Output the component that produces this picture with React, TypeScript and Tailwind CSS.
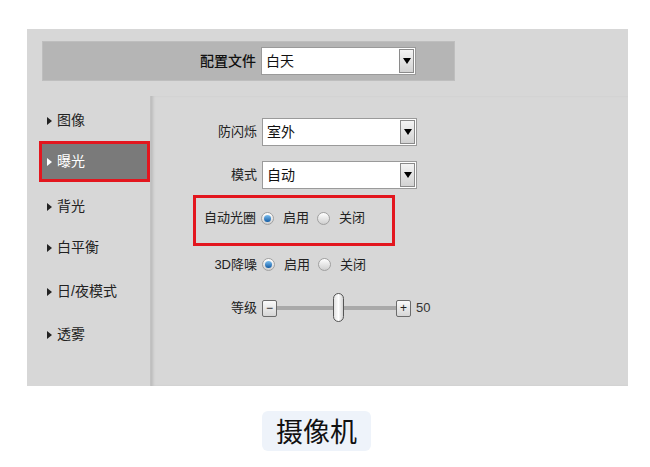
import React from 'react';

const menu = ['图像', '曝光', '背光', '白平衡', '日/夜模式', '透雾'];
const menuGaps = ['', '', 'mt-[4px]', 'mt-[0px]', 'mt-[3px]', 'mt-[2px]'];

const Triangle = ({ light }: { light?: boolean }) => (
  <span
    className={`inline-block h-0 w-0 border-y-[4px] border-l-[5px] border-y-transparent ${
      light ? 'border-l-white' : 'border-l-[#222]'
    }`}
  />
);

const Select = ({ value }: { value: string }) => (
  <div className="flex h-[28px] w-[155px] items-stretch border border-[#9a9a9a] bg-white">
    <span className="flex-1 pl-[4px] text-[14px] leading-[26px] text-[#111]">{value}</span>
    <span className="m-[1px] flex w-[15px] items-center justify-center border border-[#8a8a8a] bg-gradient-to-b from-[#f4f4f4] to-[#d2d2d2]">
      <span className="h-0 w-0 border-x-[4px] border-t-[6px] border-x-transparent border-t-black" />
    </span>
  </div>
);

const Radio = ({ checked }: { checked?: boolean }) => (
  <span className="flex h-[13px] w-[13px] items-center justify-center rounded-full border border-[#a0a0a0] bg-gradient-to-b from-[#ffffff] to-[#cfcfcf]">
    {checked && <span className="h-[7px] w-[7px] rounded-full bg-gradient-to-b from-[#7cc0f0] to-[#0a5aa3]" />}
  </span>
);

const RadioPair = () => (
  <div className="flex items-center text-[13px] text-[#222]">
    <Radio checked />
    <span className="ml-[9px]">启用</span>
    <span className="ml-[8px]">
      <Radio />
    </span>
    <span className="ml-[9px]">关闭</span>
  </div>
);

const StepButton = ({ sign }: { sign: string }) => (
  <span className="flex h-[17px] w-[15px] items-center justify-center rounded-[2px] border border-[#6b6b6b] bg-gradient-to-b from-[#fafafa] to-[#d6d6d6] text-[12px] leading-none text-[#222]">
    {sign}
  </span>
);

export default function App() {
  return (
    <div className="h-[467px] w-[650px] bg-white pl-[27px] pt-[29px] font-['Liberation_Sans','Noto_Sans_CJK_SC',sans-serif] text-[#222]">
      <div className="flex h-[357px] w-[601px] flex-col bg-[#d7d7d7]">
        {/* 配置文件 */}
        <div className="ml-[15px] mt-[12px] flex h-[40px] w-[413px] items-center justify-end border border-[#bebebe] bg-[#b5b5b5] pr-[38px]">
          <span className="mr-[5px] text-[14px] font-medium text-[#111]">配置文件</span>
          <Select value="白天" />
        </div>

        <div className="mt-[15px] flex flex-1">
          {/* 左侧菜单 */}
          <div className="w-[123px] pt-[4px]">
            {menu.map((item, i) =>
              i === 1 ? (
                <div
                  key={item}
                  className="ml-[12px] flex h-[41px] items-center border-[3px] border-[#e3161e] bg-[#7a7a7a] pl-[5px] text-[14px] text-white"
                >
                  <Triangle light />
                  <span className="ml-[5px]">{item}</span>
                </div>
              ) : (
                <div key={item} className={`ml-[12px] flex h-[41px] items-center pl-[8px] text-[14px] ${menuGaps[i]}`}>
                  <Triangle />
                  <span className="ml-[5px]">{item}</span>
                </div>
              )
            )}
          </div>

          {/* 设置内容 */}
          <div className="flex-1 border-l border-[#c2c2c2] pt-[21px] text-[13px] shadow-[inset_3px_0_3px_-1px_rgba(0,0,0,0.13)]">
            <div className="flex h-[29px] items-center">
              <span className="w-[106px] text-right">防闪烁</span>
              <span className="ml-[5px]">
                <Select value="室外" />
              </span>
            </div>
            <div className="mt-[14px] flex h-[29px] items-center">
              <span className="w-[106px] text-right">模式</span>
              <span className="ml-[5px]">
                <Select value="自动" />
              </span>
            </div>
            <div className="ml-[42px] mt-[6px] flex h-[51px] w-[202px] items-center border-[3px] border-[#e3161e] pb-[5px]">
              <span className="w-[60px] text-right">自动光圈</span>
              <span className="ml-[5px]">
                <RadioPair />
              </span>
            </div>
            <div className="mt-[4px] flex h-[29px] items-center">
              <span className="w-[106px] text-right">3D降噪</span>
              <span className="ml-[5px]">
                <RadioPair />
              </span>
            </div>
            <div className="mt-[14px] flex h-[30px] items-center">
              <span className="w-[106px] text-right">等级</span>
              <div className="ml-[5px] flex items-center">
                <StepButton sign="−" />
                <div className="relative h-[4px] w-[119px] bg-[#a9a9a9]">
                  <span className="absolute left-[56px] top-[-13px] h-[29px] w-[11px] rounded-full border border-[#555] bg-gradient-to-r from-[#e2e2e2] via-[#ffffff] to-[#d0d0d0]" />
                </div>
                <StepButton sign="+" />
                <span className="ml-[5px] text-[13px] text-[#333]">50</span>
              </div>
            </div>
          </div>
        </div>
      </div>

      <div className="ml-[235px] mt-[25px] flex h-[40px] w-[109px] items-center justify-center rounded-[6px] bg-[#eef3fa] text-[27px] text-[#111] font-['Noto_Sans_CJK_SC',sans-serif]">
        摄像机
      </div>
    </div>
  );
}
